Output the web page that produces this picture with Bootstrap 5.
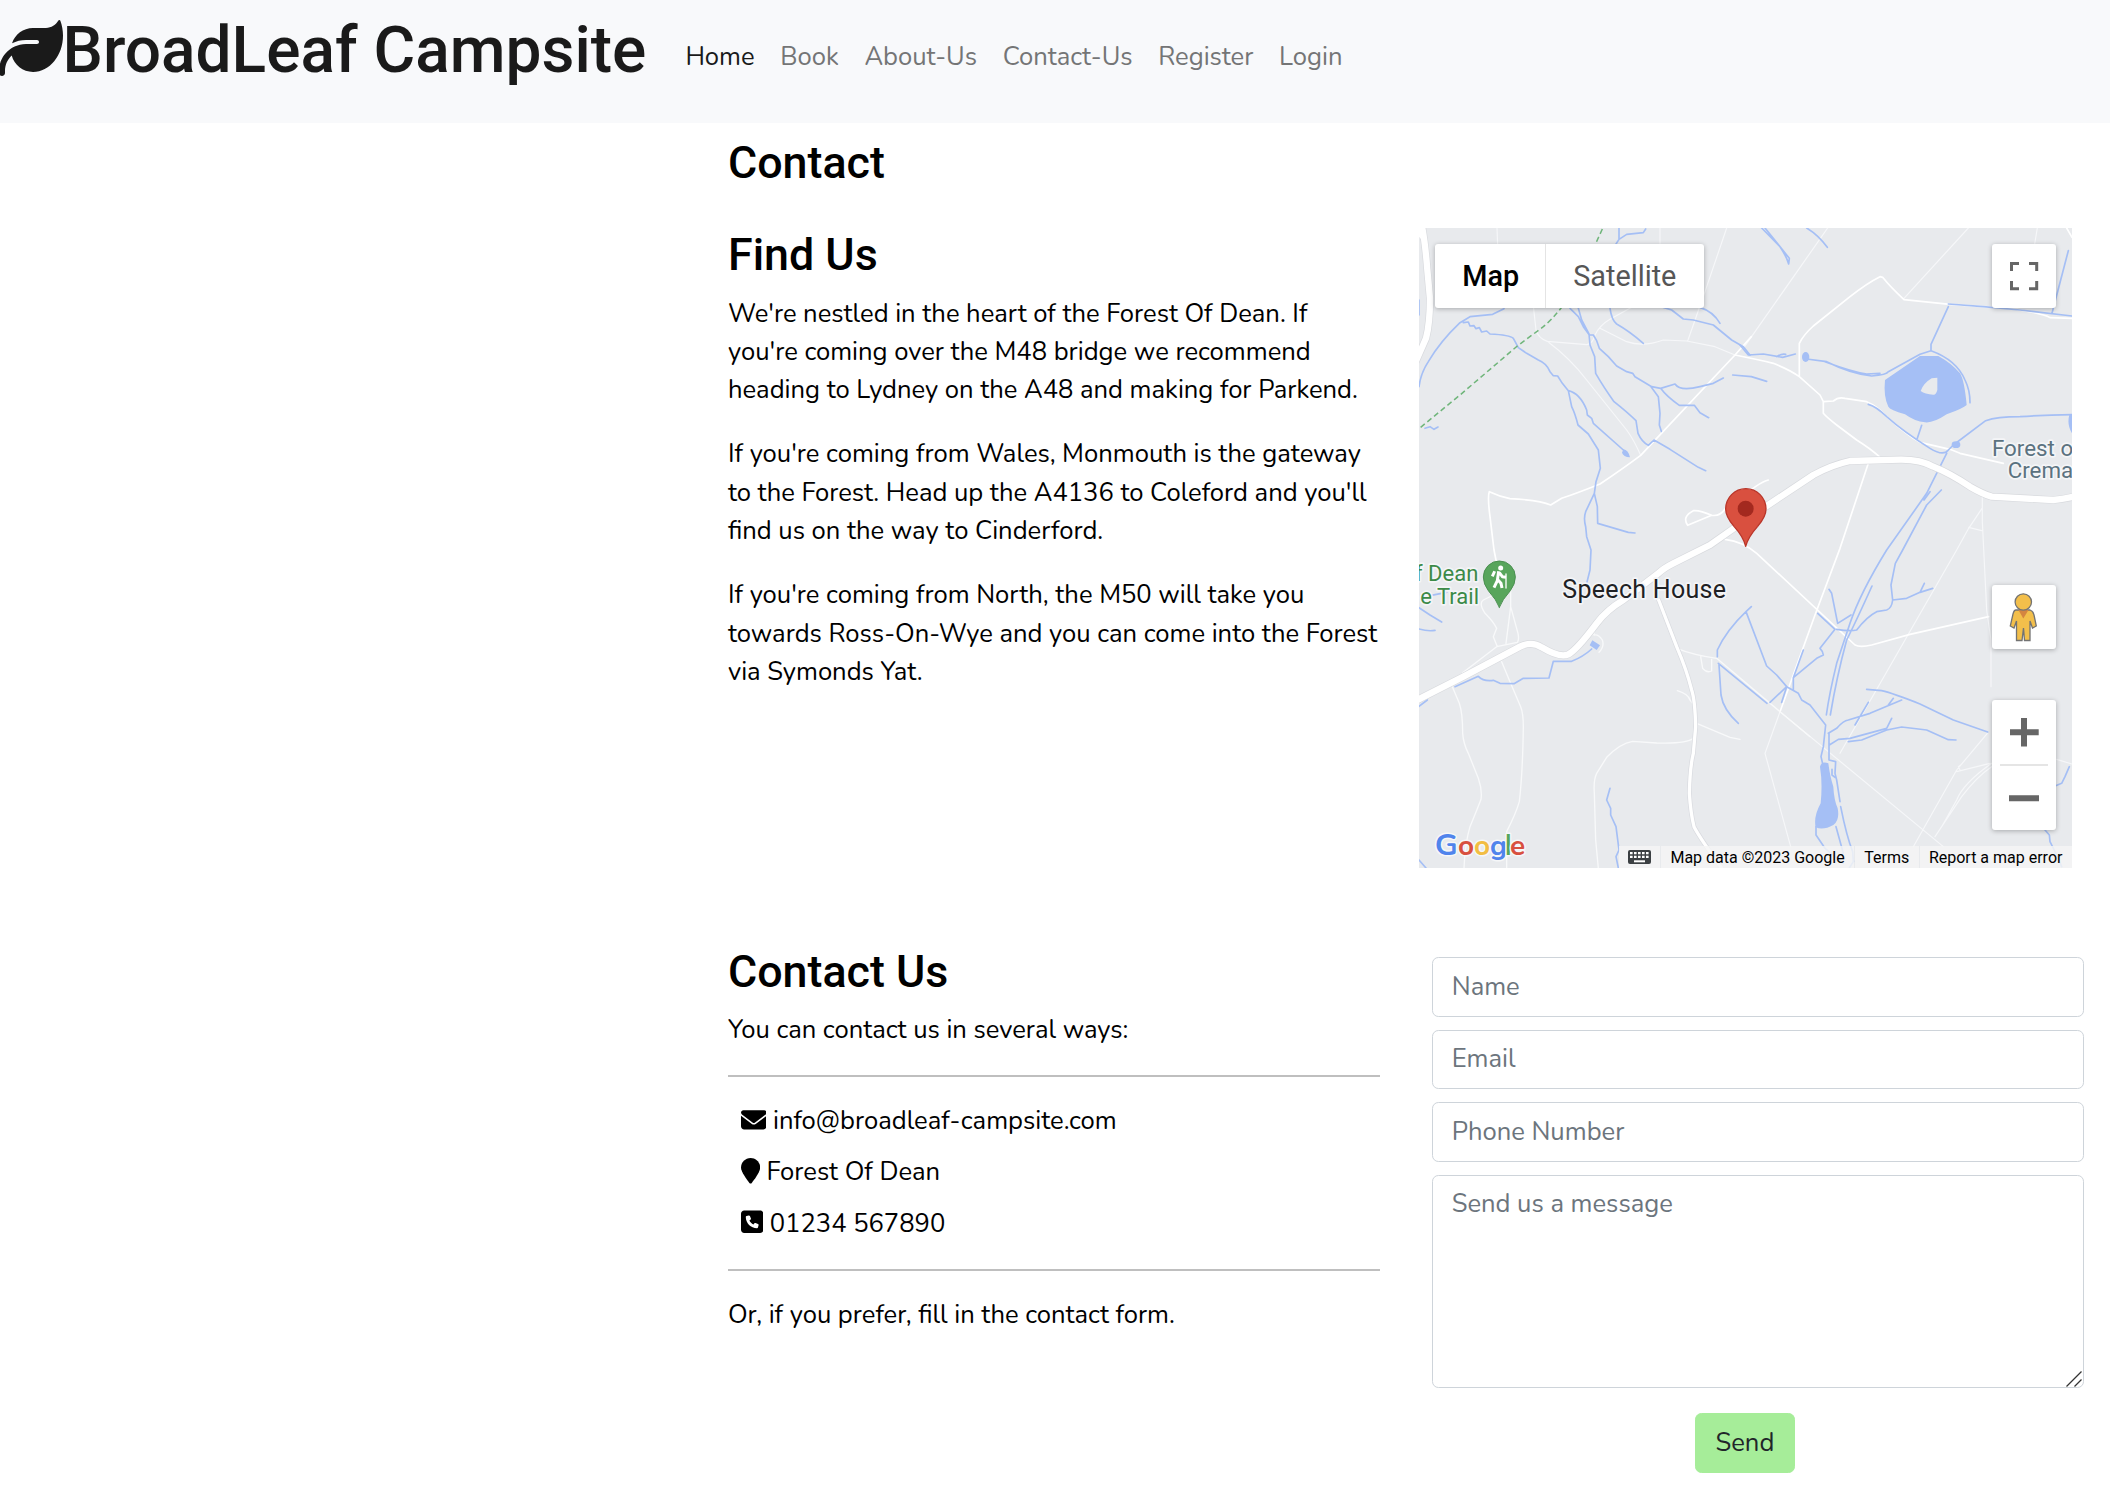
<!DOCTYPE html>
<html lang="en">
<head>
<meta charset="utf-8">
<meta name="viewport" content="width=device-width, initial-scale=1">
<title>BroadLeaf Campsite - Contact</title>
<link rel="stylesheet" href="https://cdn.jsdelivr.net/npm/bootstrap@5.3.0/dist/css/bootstrap.min.css">
<style>
  html { font-size: 25.6px; }
  body { font-family: Nunito, Lato, "Open Sans", sans-serif; font-size: 1rem; line-height: 1.5; color: #000; background: #fff; overflow-x: hidden; }
  h1, h2 { font-family: Roboto, sans-serif; font-weight: 500; line-height: 1.2; }
  h2 { font-size: 1.75rem; color: #000; margin-bottom: .5rem; }
  .site-nav { height: 122.7px; background: #f8f9fb; padding: .5rem 0 0; }
  .site-title { font-size: 2.5rem; color: #1a1a1a; margin: 0 0 0 -1.5px; white-space: nowrap; }
  .site-title svg { width: 64px; height: 64px; vertical-align: -8px; display: inline-block; }
  .site-links { margin-left: 26.3px; padding-top: 25.6px; }
  .site-links .nav-link { padding: 0 .5rem; color: #747576; }
  .site-links .nav-link.active { color: #19191a; }
  .page-main { padding: 13.3px 38.9px 0 37.2px; }
  .page-title { margin-bottom: 1.5rem; }
  .find-row { height: 716.5px; }
  .contact-intro { margin: -.6px 0 0; }
  .rule { margin: 1rem 0; border: 0; border-top: 2px solid #bfbfbf; opacity: 1; }
  .ways { padding-left: .5rem; }
  .ways li + li { margin-top: .5rem; }
  .ways svg { height: 1em; vertical-align: -.125em; }
  .contact-form { margin: .5rem -.5rem 0 .5rem; }
  .contact-form .form-control { border: 1px solid #ced4da; border-radius: .25rem; padding: .375rem .75rem; font-size: 1rem; line-height: 1.5; margin-bottom: .5rem; }
  .contact-form .form-control::placeholder { color: #6c757d; opacity: 1; }
  .contact-form textarea.form-control { height: 213px; margin-bottom: 0; resize: none; }
  .grip { right: 2px; bottom: 1px; }
  .btn-send { background: #a6ed99; color: #212529; border: 1px solid #a6ed99; border-radius: .25rem; padding: .375rem .75rem; margin-top: 1rem; font-size: 1rem; line-height: 1.5; }
  .map-box { width: 653px; height: 640px; background: #e8eaed; overflow: hidden; font-family: Roboto, sans-serif; }
  .map-box > svg { display: block; width: 653px; height: 640px; }
  .ctl { background: #fff; border-radius: 3px; box-shadow: 0 1px 5px rgba(0,0,0,.28); }
  .ctl-type { left: 16px; top: 16px; width: 269px; height: 64px; font-size: 28.8px; line-height: 64px; }
  .ctl-type .on { width: 111px; font-weight: 500; border-right: 1px solid #e4e4e4; color: #000; padding-left: 27.5px; }
  .ctl-type .off { color: #565656; padding-left: 27.5px; }
  .ctl-full { right: 16px; top: 16px; width: 64px; height: 64px; }
  .ctl-peg { right: 16px; top: 357px; width: 64px; height: 64px; }
  .ctl-zoom { right: 16px; top: 472px; width: 64px; height: 130px; }
  .ctl svg { display: block; }
  .credits { right: 0; bottom: 0; height: 22px; font-size: 16px; line-height: 23px; color: #000; }
  .credits > div { background: rgba(245,245,245,.82); margin-left: 1px; padding: 0 9.3px; white-space: nowrap; }
  .credits svg { display: block; margin-top: 4px; }
</style>
<script src="https://cdn.jsdelivr.net/npm/bootstrap@5.3.0/dist/js/bootstrap.bundle.min.js"></script>
</head>
<body>
<nav class="site-nav d-flex align-items-start">
  <h1 class="site-title"><svg viewBox="0 0 512 512" fill="currentColor"><path d="M272 96c-78.6 0-145.1 51.5-167.7 122.5c33.6-17 71.5-26.5 111.7-26.5h88c8.8 0 16 7.2 16 16s-7.2 16-16 16H216c-16.6 0-32.7 1.9-48.3 5.4c-25.9 5.9-49.9 16.4-71.4 30.7C38.3 298.8 0 364.9 0 440v16c0 13.3 10.7 24 24 24s24-10.7 24-24V440c0-48.7 20.7-92.5 53.8-123.2C121.6 392.3 190.3 448 272 448l1 0c132.1-.7 239-130.9 239-291.4c0-42.6-7.5-83.1-21.1-119.6c-2.6-6.9-12.7-6.6-16.2-.1C455.9 72.1 418.7 96 376 96L272 96z"/></svg>BroadLeaf Campsite</h1>
  <ul class="nav site-links flex-nowrap">
    <li class="nav-item"><a class="nav-link active" href="#">Home</a></li>
    <li class="nav-item"><a class="nav-link" href="#">Book</a></li>
    <li class="nav-item"><a class="nav-link" href="#">About-Us</a></li>
    <li class="nav-item"><a class="nav-link" href="#">Contact-Us</a></li>
    <li class="nav-item"><a class="nav-link" href="#">Register</a></li>
    <li class="nav-item"><a class="nav-link" href="#">Login</a></li>
  </ul>
</nav>

<main class="container-fluid page-main">
  <div class="row">
    <div class="col-4 offset-4"><h2 class="page-title">Contact</h2></div>
  </div>
  <div class="row find-row">
    <div class="col-4 offset-4">
      <h2>Find Us</h2>
      <p>We're nestled in the heart of the Forest Of Dean. If you're coming over the M48 bridge we recommend heading to Lydney on the A48 and making for Parkend.</p>
      <p>If you're coming from Wales, Monmouth is the gateway to the Forest. Head up the A4136 to Coleford and you'll find us on the way to Cinderford.</p>
      <p>If you're coming from North, the M50 will take you towards Ross-On-Wye and you can come into the Forest via Symonds Yat.</p>
    </div>
    <div class="col-4">
      <div class="map-box position-relative">
        <!-- Map artwork, three units to a pixel -->
        <svg viewBox="27 24 1959 1920" fill="none" stroke-linejoin="round" stroke-linecap="round">
          <g stroke="#f6f7f9" stroke-width="3.500">
            <path d="M261 24L263 75M368 240L378 330Q385 355 412 364L530 374Q548 372 555 345Q570 315 600 298L665 262M412 364Q480 415 530 480L650 630Q672 660 692 706M570 325L650 365Q700 382 760 360L830 363L915 380L975 405M950 24L885 215L833 363M750 24V70"/>
            <path d="M1253 24L1000 385M1675 24L1482 235M1882 24L1874 72" />
            <path d="M1717 830L1717 905L1730 1170L1743 1260V1400M1716 865L1676 925L1640 990L1290 1600M1676 922L1715 932M1110 1475L1065 1600L1142 1880M1110 1475L1600 1880M1732 1540L1640 1650L1510 1880M1640 1655L1740 1630M1650 1650L1645 1640L1652 1635M1575 1850L1655 1730Q1700 1670 1745 1640M1595 1820L1640 1740Q1660 1690 1745 1630M1940 1618L1986 1632"/>
          </g>
          <g stroke="#fff" stroke-width="5">
            <path d="M1024 350L975 405L692 706Q640 745 570 792Q500 820 455 835L422 855Q390 840 300 836Q270 830 238 815Q232 830 240 890L252 990L264 1050M975 405Q1050 420 1090 430Q1140 450 1168 470L1168 370Q1180 345 1210 318L1320 230Q1370 190 1410 170L1418 172Q1440 200 1482 239L1620 253L1800 265Q1900 280 1920 293L1986 295M1168 470L1230 525L1240 545V580Q1250 592 1280 615L1340 660Q1380 685 1408 710M1240 545L1270 543Q1285 530 1305 535L1370 545Q1405 560 1430 590Q1490 645 1530 667L1620 688L1650 700L1780 730M1970 24L1986 52"/>
            <path d="M945 867Q930 890 905 886Q870 870 850 872Q815 890 833 916L905 886M945 935V958Q1000 965 1040 1000L1335 1275Q1350 1283 1385 1275L1500 1243L1736 1190M1375 730L1290 985L1215 1185L1110 1475M990 840Q1040 790 1075 780"/>
          </g>
          <g transform="translate(0 960)" stroke="#f8f9fa" stroke-width="4">
            <path d="M158 398L260 320L322 307Q328 300 324 280L302 200V110M302 200L288 310M262 320L250 290L260 265Q250 245 225 220Q205 190 220 180L250 165M275 365L300 425L332 500Q340 520 340 560Q338 700 328 785Q318 820 290 875V985M127 440L148 490Q158 520 158 580Q160 610 175 640L205 715Q217 750 213 778Q205 800 180 860Q165 910 162 985M552 255V285Q565 282 577 300Q584 320 567 337M525 293Q545 290 552 278M565 985L557 900L553 760Q550 720 560 700L590 652Q630 610 668 604L740 609Q830 612 850 595M860 550L960 592L990 598M800 325Q850 345 920 355L1110 515L1200 590M872 350L878 385Q890 400 905 393V358M802 452Q835 462 840 480L848 490"/>
          </g>
          <path d="M746 1140L800 1280Q830 1350 845 1410Q855 1440 857 1520L850 1600Q840 1640 838 1720Q842 1780 852 1820Q870 1855 935 1944" stroke="#d8dadf" stroke-width="14"/>
          <path d="M746 1140L800 1280Q830 1350 845 1410Q855 1440 857 1520L850 1600Q840 1640 838 1720Q842 1780 852 1820Q870 1855 935 1944" stroke="#fff" stroke-width="10"/>
          <g stroke="#a5bff5" stroke-width="5">
            <path d="M27 500Q32 460 55 425Q90 365 150 308L180 290L248 283L282 266M160 308L175 306L180 318L192 317L198 326L208 323L215 336L230 333L240 342Q300 345 310 355L325 383L350 400L385 420Q410 430 420 455L430 467L443 468L457 490L475 512L485 560Q495 580 504 615L535 642L565 690L571 745L558 785L553 820L527 875Q520 895 527 920L530 950L543 990L540 1050L530 1090M553 820L562 860L563 910L655 937L675 939M475 512Q510 520 530 570L532 585L545 595L550 610L640 690M480 265L505 290L520 320L538 345L550 345L560 362L568 385L595 410L620 438L650 455L668 460L675 470L700 485L725 500L752 505L795 492Q810 515 870 500L910 490L940 474M752 505Q770 530 808 556L853 556L870 578L896 593M723 500L745 530L750 580L748 615L754 634M505 265L515 300L537 342L540 375L554 410L557 460Q580 500 612 545Q650 575 678 602L684 640Q695 665 715 676L732 660L780 688L865 742L887 752M600 265Q605 300 620 312Q660 335 700 370M760 262L785 270L820 297L850 300L910 315L965 360L1000 380L1020 405M870 262Q910 275 930 310M627 24V58L618 72M627 58L650 43L700 38L707 27M968 465L1024 470L1070 484M45 625L60 620L72 628L84 621M27 240V285"/>
            <path d="M1055 24L1110 80Q1130 110 1136 132L1138 115L1065 24M1190 24Q1225 45 1252 82M990 375L1015 405L1060 402L1118 412L1156 402M1100 410Q1115 400 1127 403M1190 417L1250 425Q1320 460 1385 468Q1430 465 1435 455L1530 403L1563 392Q1640 420 1665 480Q1680 510 1680 548M1245 425Q1325 455 1370 462L1410 460M1563 390V373L1615 260M1615 252L1720 260L1830 270L1986 288M1926 280L1975 92M1375 553Q1400 560 1430 590Q1480 635 1560 685Q1600 710 1615 690L1630 675L1727 602Q1760 590 1830 590Q1900 585 1986 584M1535 616L1522 655M1610 700L1590 740L1550 820L1430 990Q1350 1120 1320 1210L1280 1330Q1258 1420 1249 1485M1594 810L1550 855L1478 990L1456 1030L1443 1095L1448 1140Q1445 1165 1430 1170L1400 1175Q1370 1190 1340 1230Q1320 1235 1280 1228M1448 1140L1490 1135L1530 1117L1568 1105M1530 1117L1543 1090M1386 1098Q1340 1200 1310 1260Q1280 1370 1261 1485M1542 840L1560 815"/>
            <path d="M1024 1160L1008 1175Q950 1230 922 1290V1310M1008 1175L1070 1338L1100 1365L1130 1400L1165 1420L1175 1440L1200 1455L1247 1515L1240 1580L1233 1610L1240 1640M1257 1108L1265 1120L1283 1210L1323 1185M1223 1180L1275 1228L1230 1285Q1240 1295 1240 1305L1220 1315L1150 1373V1410M1180 1290L1150 1373M1130 1400L1080 1447M927 1335L933 1425Q940 1470 985 1510M925 1330L1071 1450M1130 1400L1115 1447M1255 1540L1280 1525Q1300 1502 1315 1500L1380 1480L1475 1440M1335 1515L1375 1447M1435 1455L1450 1435M1258 1575L1285 1558L1320 1555L1430 1525L1445 1495M1315 1565L1355 1560L1430 1530L1475 1521L1550 1530L1615 1559L1638 1560M1370 1408L1415 1412Q1450 1420 1530 1452L1630 1500L1733 1536M1257 1540V1620L1277 1625L1275 1660L1280 1680L1290 1745M1266 1648V1665L1275 1672M1218 1820V1845L1245 1885L1300 1930M1292 1760Q1310 1850 1328 1895L1330 1925L1318 1944M1278 1820L1300 1900M1978 1640L1965 1670L1955 1690L1937 1697M1905 1830L1918 1845L1920 1865L1940 1905L1955 1940"/>
            <path d="M27 1163L60 1185L95 1206M27 1227Q55 1235 75 1231M60 1127L110 1117M27 1459L52 1440M135 1400L205 1369Q220 1385 250 1381L270 1390L312 1391L340 1375L417 1374L430 1324H485Q520 1310 545 1287M600 1705L590 1740L602 1765V1785L618 1820L627 1890L618 1910L625 1944M27 1920L48 1944"/>
          </g>
          <g fill="#a5bff5">
            <path d="M1425 480L1530 408H1585Q1625 430 1650 460Q1663 480 1670 555Q1660 565 1610 583Q1570 610 1545 607Q1515 605 1485 583Q1440 570 1435 560Q1420 530 1425 480Z"/>
            <path d="M1532 513Q1540 490 1565 475L1582 473V510Q1578 525 1570 524Q1545 523 1532 513Z" fill="#e8eaed"/>
            <ellipse cx="1187" cy="411" rx="11" ry="15"/><ellipse cx="1638" cy="674" rx="13" ry="10"/>
            <path d="M640 688Q655 690 660 712Q640 710 636 698ZM1978 584H1986V640Q1970 615 1978 584Z"/>
            <path d="M1230 1640Q1235 1622 1255 1630Q1260 1670 1270 1700Q1272 1740 1283 1765Q1290 1800 1270 1815Q1240 1832 1217 1822Q1210 1790 1232 1750Q1238 1690 1230 1640Z"/>
            <path d="M547 1261L570 1276L560 1290L539 1276Z"/>
          </g>
          <path d="M577 27L552 82L525 150L455 262Q425 300 400 320L322 378L150 525L27 626" stroke="#6fb57a" stroke-width="4.500" stroke-dasharray="16 10" stroke-linecap="butt"/>
          <g stroke-linecap="butt">
            <g stroke="#d8dade" stroke-width="23">
              <path d="M10 1446L160 1370L330 1280Q365 1262 395 1282Q450 1315 475 1303Q500 1290 560 1210Q590 1170 640 1140L745 1060Q760 1045 790 1030L900 975L1000 905L1070 858L1210 765Q1265 735 1320 723L1470 719Q1530 718 1570 740Q1620 760 1680 800Q1720 823 1745 830L1930 840Q1960 838 2000 828"/>
              <path d="M34 10Q45 60 52 150L60 235Q60 310 48 355L15 430"/>
            </g>
            <g stroke="#fff" stroke-width="19">
              <path d="M10 1446L160 1370L330 1280Q365 1262 395 1282Q450 1315 475 1303Q500 1290 560 1210Q590 1170 640 1140L745 1060Q760 1045 790 1030L900 975L1000 905L1070 858L1210 765Q1265 735 1320 723L1470 719Q1530 718 1570 740Q1620 760 1680 800Q1720 823 1745 830L1930 840Q1960 838 2000 828"/>
              <path d="M34 10Q45 60 52 150L60 235Q60 310 48 355L15 430"/>
            </g>
          </g>
          <path d="M27 24H45L36 60L27 50Z" fill="#fff"/>
          <g font-family="Roboto, sans-serif" stroke="#f4f5f7" stroke-width="10" paint-order="stroke">
            <text x="457" y="1133" font-size="75" fill="#202124" textLength="491">Speech House</text>
            <text x="205" y="1082" font-size="66" fill="#3c8a48" text-anchor="end">f Dean</text>
            <text x="207" y="1151" font-size="66" fill="#3c8a48" text-anchor="end">e Trail</text>
            <text x="1746" y="708" font-size="67" fill="#5b7280">Forest o</text>
            <text x="1793" y="773" font-size="67" fill="#5b7280">Crema</text>
          </g>
          <path d="M268 1162Q260 1140 235 1112Q220 1092 220 1071A48 48 0 0 1 316 1071Q316 1092 301 1112Q276 1140 268 1162Z" fill="#58a55c" stroke="#4a8f50" stroke-width="3"/>
          <circle cx="272" cy="1044" r="7.500" fill="#fff"/>
          <path d="M266 1054L262 1082L252 1103M264 1080L273 1090L276 1104M268 1058L277 1070L288 1072" stroke="#fff" stroke-width="9" stroke-linecap="butt"/>
          <path d="M250 1052L258 1055L251 1071L243 1067Z" fill="#fff"/><path d="M288 1062V1104" stroke="#fff" stroke-width="4"/>
          <path d="M1007 979Q1000 950 972 919Q947 890 947 867A60.500 61 0 0 1 1068 867Q1068 890 1043 919Q1015 950 1007 979Z" fill="#d9503f" stroke="#b93529" stroke-width="4"/>
          <circle cx="1007" cy="866" r="24" fill="#a3291f"/>
          <g font-family="Nunito, Lato, sans-serif" font-size="84" font-weight="700" stroke="#f6f7f8" stroke-width="9" paint-order="stroke">
            <text x="74" y="1905" font-size="90" fill="#5084ec" textLength="69" lengthAdjust="spacingAndGlyphs">G</text>
            <text x="144" y="1905" fill="#d8503f">o</text>
            <text x="192" y="1905" fill="#f2bd42">o</text>
            <text x="240" y="1905" fill="#5084ec">g</text>
            <text x="284" y="1905" font-family="Inter, sans-serif" font-weight="500" fill="#58a55c">l</text>
            <text x="300" y="1905" fill="#d8503f">e</text>
          </g>
        </svg>
        <div class="ctl ctl-type position-absolute d-flex"><div class="on">Map</div><div class="off">Satellite</div></div>
        <div class="ctl ctl-full position-absolute"><svg width="64" height="64" fill="none" stroke="#666" stroke-width="3"><path d="M19.500 27V19.500H27M37 19.500H44.700V27M44.700 37V44.700H37M27 44.700H19.500V37"/></svg></div>
        <div class="ctl ctl-peg position-absolute"><svg width="64" height="64" fill="#f3bf4b" stroke="#737373" stroke-width="1.300"><path d="M24 25H38Q41 26 42 30L44.300 41L40.500 43L38 36V55.500H32.500L31.500 43L30 55.500H24.500V36L22 43L18.300 41L21 29Q22 25 24 25Z"/><path d="M26.500 25H36.500L31.300 33.500Z" fill="#d58540" stroke="none"/><circle cx="31.300" cy="17" r="8.200"/></svg></div>
        <div class="ctl ctl-zoom position-absolute"><svg width="64" height="130" stroke="#666" stroke-width="6"><path d="M18 32.300H46.700M32 18V46.500M17 98.300H47"/><path d="M8 65H56" stroke="#e5e5e5" stroke-width="2"/></svg></div>
        <div class="credits position-absolute d-flex">
          <div><svg width="23" height="14" viewBox="0 0 23 14"><rect width="23" height="14" rx="2" fill="#3c4043"/><path d="M2 3.200H21M2 6.900H21" stroke="#fff" stroke-width="2.300" stroke-dasharray="2.600 1.400"/><path d="M6 11.300H17" stroke="#fff" stroke-width="2"/></svg></div>
          <div>Map data ©2023 Google</div><div>Terms</div><div>Report a map error</div>
        </div>
      </div>
    </div>
  </div>

  <div class="row">
    <div class="col-4 offset-4">
      <h2>Contact Us</h2>
      <p class="contact-intro">You can contact us in several ways:</p>
      <hr class="rule">
      <ul class="list-unstyled ways mb-0">
        <li><svg viewBox="0 0 512 512"><path d="M48 64C21.500 64 0 85.500 0 112c0 15.100 7.100 29.300 19.200 38.400L236.800 313.600c11.400 8.500 27 8.500 38.400 0L492.800 150.400c12.100-9.100 19.200-23.300 19.200-38.400c0-26.500-21.500-48-48-48H48zM0 176V384c0 35.300 28.700 64 64 64H448c35.300 0 64-28.700 64-64V176L294.400 339.200c-22.800 17.100-54 17.100-76.800 0L0 176z"/></svg> info@broadleaf-campsite.com</li>
        <li><svg viewBox="0 0 384 512"><path d="M384 192c0 87.400-117 243-168.300 307.200c-12.300 15.300-35.100 15.300-47.400 0C117 435 0 279.400 0 192C0 86 86 0 192 0S384 86 384 192z"/></svg> Forest Of Dean</li>
        <li><svg viewBox="0 0 448 512"><path d="M64 32C28.700 32 0 60.700 0 96V416c0 35.300 28.700 64 64 64H384c35.300 0 64-28.700 64-64V96c0-35.300-28.700-64-64-64H64zm90.700 96.700c9.700-2.600 19.900 2.300 23.700 11.600l20 48c3.400 8.200 1 17.600-5.800 23.200L168 231.700c16.600 35.200 45.100 63.700 80.300 80.300l20.200-24.700c5.600-6.800 15-9.200 23.200-5.800l48 20c9.300 3.900 14.200 14 11.600 23.700l-12 44C336.900 378 329 384 320 384C196.300 384 96 283.700 96 160c0-9 6-16.900 14.700-19.300l44-12z"/></svg> 01234 567890</li>
      </ul>
      <hr class="rule">
      <p>Or, if you prefer, fill in the contact form.</p>
    </div>
    <div class="col-4">
      <form>
        <div class="contact-form">
          <input class="form-control" placeholder="Name">
          <input class="form-control" placeholder="Email">
          <input class="form-control" placeholder="Phone Number">
          <div class="position-relative">
            <textarea class="form-control d-block" rows="5" placeholder="Send us a message"></textarea>
            <svg class="grip position-absolute" width="16" height="16" stroke="#333" stroke-width="1.300"><path d="M.5 15.500L15.500 .5M8.500 15.500L15.500 8.500"/></svg>
          </div>
        </div>
        <div class="text-center"><button type="button" class="btn btn-send">Send</button></div>
      </form>
    </div>
  </div>
</main>
</body>
</html>
